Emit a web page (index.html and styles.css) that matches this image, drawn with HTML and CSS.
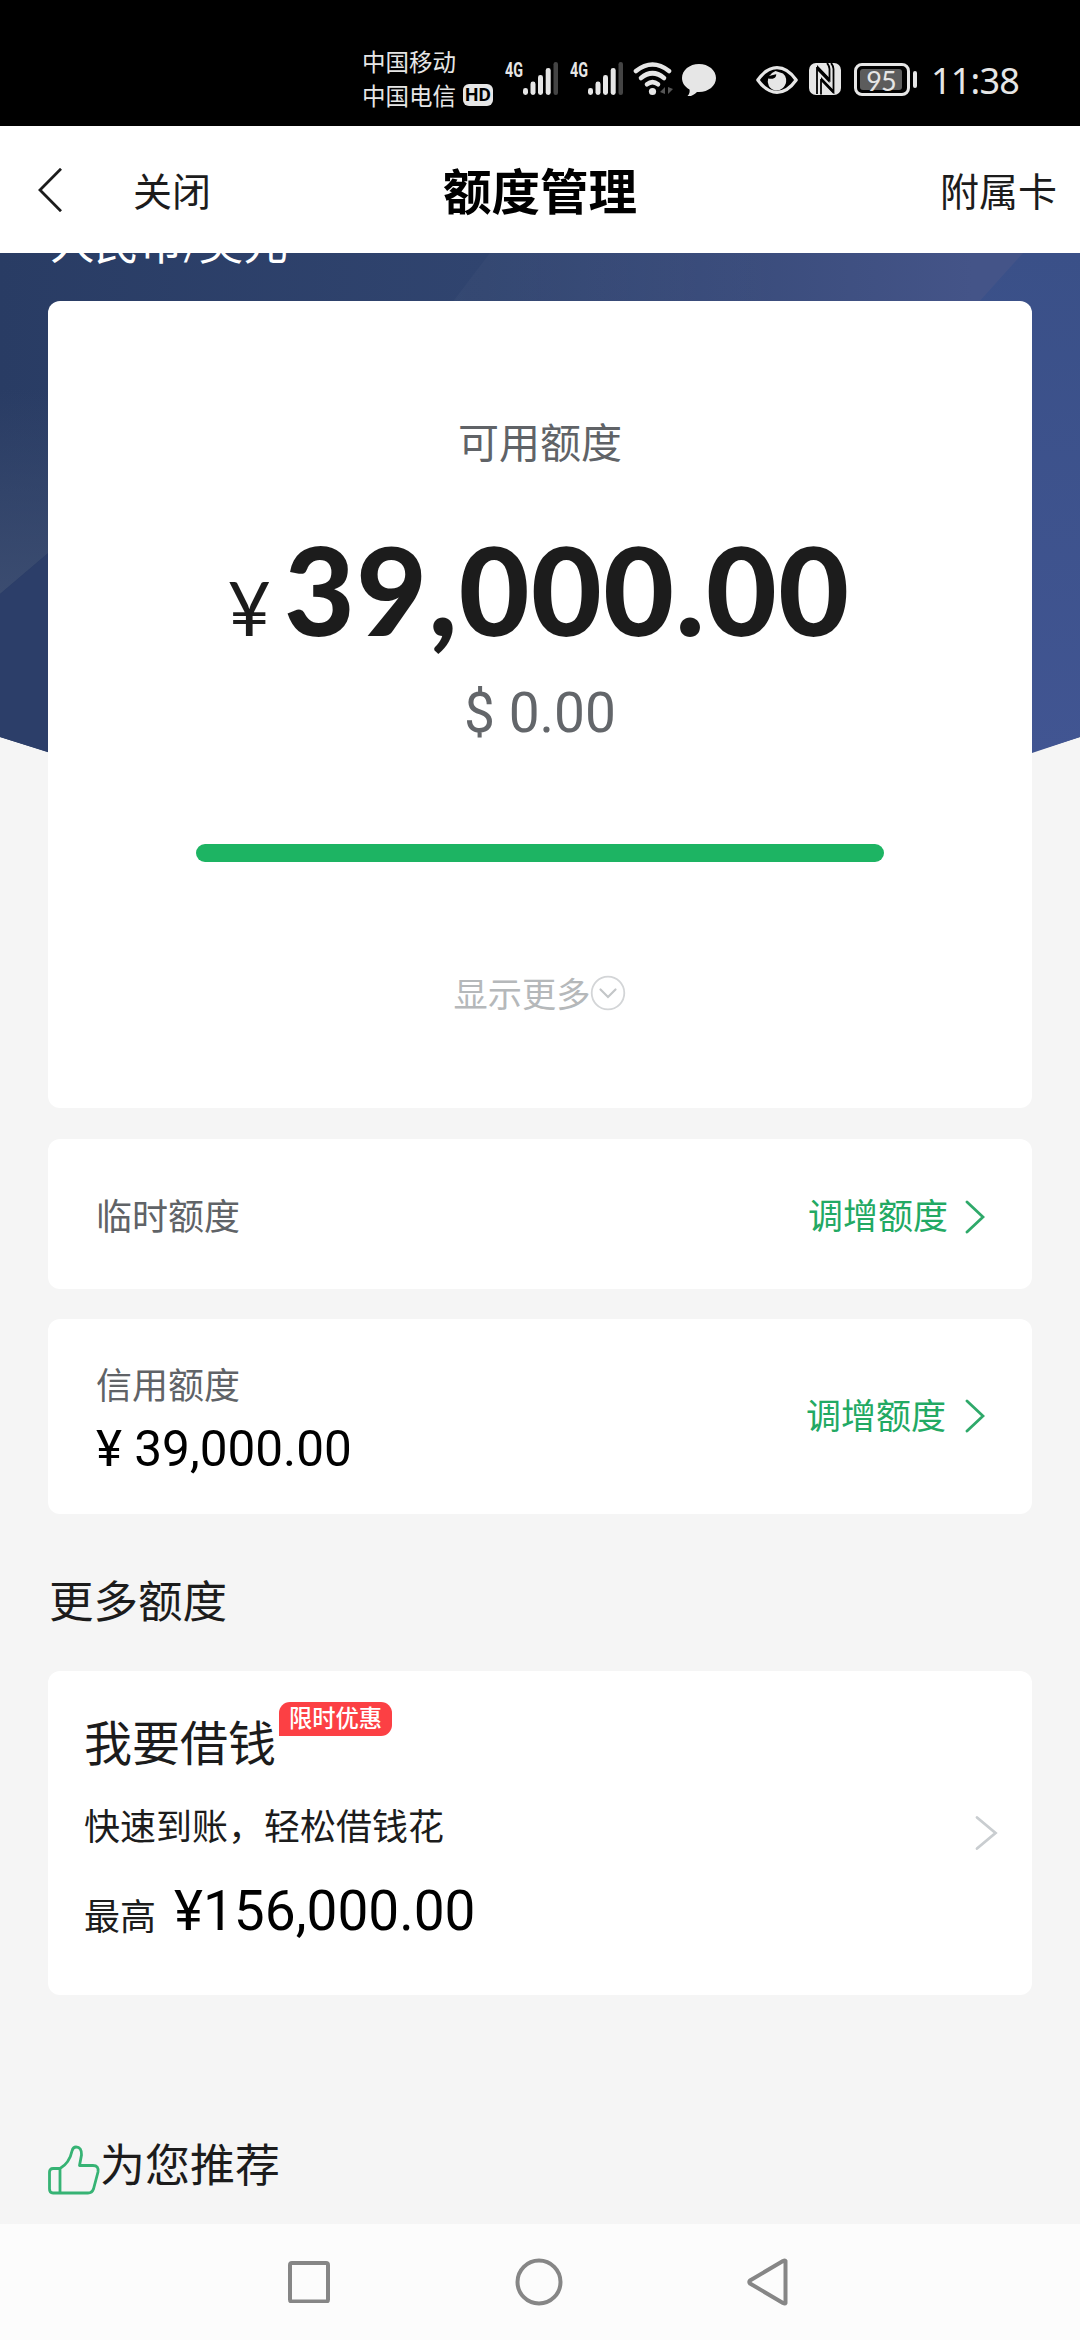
FILE: index.html
```html
<!DOCTYPE html>
<html lang="zh-CN">
<head>
<meta charset="utf-8">
<title>额度管理</title>
<link rel="stylesheet" href="styles.css">
</head>
<body>
<div class="screen">
  <div class="status">
    <div class="carriers">
      <div class="carrier">中国移动</div>
      <div class="carrier">中国电信<span class="hd">HD</span></div>
    </div>
    <svg class="signal" width="54" height="42" viewBox="0 -8 54 42" fill="#e6e6e6">
      <text x="0" y="15" class="net" textLength="18" lengthAdjust="spacingAndGlyphs">4G</text>
      <rect x="18" y="26" width="5" height="7" rx="2.4"/><rect x="25.500" y="19.500" width="5" height="13.500" rx="2.400"/><rect x="33" y="13" width="5" height="20" rx="2.400"/><rect x="40.700" y="6" width="5" height="27" rx="2.400"/><rect x="48.500" y="0" width="4.500" height="33" rx="2.200" fill="#444"/>
    </svg>
    <svg class="signal second" width="54" height="42" viewBox="0 -8 54 42" fill="#e6e6e6">
      <text x="0" y="15" class="net" textLength="18" lengthAdjust="spacingAndGlyphs">4G</text>
      <rect x="18" y="26" width="5" height="7" rx="2.4"/><rect x="25.500" y="19.500" width="5" height="13.500" rx="2.400"/><rect x="33" y="13" width="5" height="20" rx="2.400"/><rect x="40.700" y="6" width="5" height="27" rx="2.400"/><rect x="48.500" y="0" width="4.500" height="33" rx="2.200" fill="#444"/>
    </svg>
    <svg class="wifi" width="42" height="34" viewBox="0 0 42 34" fill="none" stroke="#e6e6e6" stroke-width="4.600" stroke-linecap="round">
      <path d="M3 9Q19.500-4 36 9"/><path d="M8 16Q19.500 6.500 31 16"/><path d="M14 22.300Q19.500 18 25 22.300"/>
      <circle cx="19.500" cy="29.500" r="3.600" fill="#e6e6e6" stroke="none"/>
      <path d="M27 30L32 25V32zM35 25V32L40 27z" fill="#555" stroke="none"/>
    </svg>
    <svg class="bubble" width="34" height="33" viewBox="0 0 34 33" fill="#e6e6e6"><path d="M17 0C26.500 0 34 6.300 34 14S26.500 28 17 28L15 27.900C12 31 9 32.500 5.500 32 7.500 30 8 27.500 7.500 25.500 3 23 0 19 0 14 0 6.300 7.500 0 17 0z"/></svg>
    <svg class="eye" width="42" height="28" viewBox="0 0 42 28"><path d="M1.800 14Q10.500 1.700 21 1.700T40.200 14Q31.500 26.300 21 26.300T1.800 14z" fill="none" stroke="#e6e6e6" stroke-width="3.200" stroke-linejoin="round"/><path d="M20 6.500C21 10.500 19 14 12.200 12.500A9 9 0 1 0 20 6.500z" fill="#e6e6e6"/><path d="M13 10Q15 8.500 16 7L19.500 5 27 7.500A9 9 0 0 1 29 19L24 20 21 8z" fill="#e6e6e6"/></svg>
    <svg class="nfc" width="32" height="32" viewBox="0 0 32 32"><rect width="32" height="32" rx="7" fill="#e6e6e6"/><path d="M8 31V4M8 4L20.500 17V6Q20 2 18 0M12 16V31.500M12 16L24.500 29V6Q24 2 22 0" fill="none" stroke="#000" stroke-width="1.800"/><path d="M8 2L20.500 15V20L8 7zM12 14L24.500 27V31L12 18z" fill="#000"/></svg>
    <div class="battery"><span class="charge">95</span></div>
    <div class="time">11:38</div>
  </div>

  <header class="topbar">
    <div class="left">
      <svg width="24" height="44" viewBox="0 0 24 44" fill="none" stroke="#1c1c1c" stroke-width="2.800"><path d="M23 .8L2 22 23 43.200"/></svg>
      <span>关闭</span>
    </div>
    <h1>额度管理</h1>
    <div class="right">附属卡</div>
  </header>

  <main class="content">
    <svg class="hero" width="1080" height="560" viewBox="0 0 1080 560">
      <defs>
        <linearGradient id="base" x1="0" y1="0" x2="1" y2="0"><stop offset="0" stop-color="#293c64"/><stop offset=".45" stop-color="#30446f"/><stop offset=".9" stop-color="#445488"/><stop offset="1" stop-color="#445488"/></linearGradient>
        <linearGradient id="haze" x1="0" y1="0" x2="0" y2="1"><stop offset=".4" stop-color="#3b4c70" stop-opacity="0"/><stop offset="1" stop-color="#3b4c70"/></linearGradient>
        <linearGradient id="edge" x1="0" y1="0" x2="0" y2="1"><stop offset="0" stop-color="#3a5088"/><stop offset="1" stop-color="#415592"/></linearGradient>
        <linearGradient id="ray" x1="0" y1="0" x2="1" y2="0"><stop offset="0" stop-color="#fff" stop-opacity=".025"/><stop offset="1" stop-color="#fff" stop-opacity="0"/></linearGradient>
      </defs>
      <path d="M0 0H1080V484Q540 660 0 484z" fill="url(#base)"/>
      <path d="M0 0H60V290L0 341z" fill="url(#haze)"/>
      <path d="M0 341L60 290V503L0 484z" fill="#2c3e69"/>
      <path d="M490 0H800V50H452z" fill="url(#ray)"/>
      <path d="M1023 0H1080V484L1020 504V50H978z" fill="url(#edge)"/>
    </svg>
    <div class="currency">人民币<span class="slash">/</span>美元</div>

    <section class="card summary">
      <div class="label">可用额度</div>
      <div class="amount"><span class="yen">¥</span><span class="figure">39,000.00</span></div>
      <div class="dollar">$ 0.00</div>
      <div class="bar"></div>
      <div class="more"><span>显示更多</span>
        <svg width="36" height="36" viewBox="0 0 36 36" fill="none"><circle cx="18" cy="18" r="16.300" stroke="#d3d5d7" stroke-width="1.800"/><path d="M10.500 14.500L18 22 25.500 14.500" stroke="#c3c6c8" stroke-width="2.200" stroke-linecap="round"/></svg>
      </div>
    </section>

    <section class="card row temp">
      <div class="label">临时额度</div>
      <div class="action"><span>调增额度</span>
        <svg width="20" height="34" viewBox="0 0 20 34" fill="none" stroke="#2fa96a" stroke-width="2.800" stroke-linecap="round"><path d="M2 2L18 17 2 32"/></svg>
      </div>
    </section>

    <section class="card row credit">
      <div class="limits">
        <div class="label">信用额度</div>
        <div class="value">¥ 39,000.00</div>
      </div>
      <div class="action"><span>调增额度</span>
        <svg width="20" height="34" viewBox="0 0 20 34" fill="none" stroke="#2fa96a" stroke-width="2.800" stroke-linecap="round"><path d="M2 2L18 17 2 32"/></svg>
      </div>
    </section>

    <h2 class="section">更多额度</h2>

    <section class="card loan">
      <div class="loan-text">
        <div class="loan-title">我要借钱<span class="badge">限时优惠</span></div>
        <div class="loan-desc">快速到账，轻松借钱花</div>
        <div class="loan-max"><span>最高</span><span class="loan-value">¥156,000.00</span></div>
      </div>
      <svg width="24" height="36" viewBox="0 0 24 36" fill="none" stroke="#c9cdd0" stroke-width="2.800" stroke-linecap="round"><path d="M3 2.500L21.500 18 3 33.500"/></svg>
    </section>

    <div class="recommend">
      <svg width="52" height="50" viewBox="0 0 52 50" fill="none" stroke="#36b374" stroke-width="2.800" stroke-linejoin="round"><path d="M12 23.500H5Q1.500 23.500 1.500 27V44Q1.500 48 5 48H40Q44 48 45.500 44L50 27Q51 20.500 45 20.500H31.500L33.500 10Q33.800 2 28 2 25 2 24 6 21.500 18 12 23.500zM12 23.500V48"/></svg>
      <span>为您推荐</span>
    </div>
  </main>

  <nav class="navbar">
    <svg width="42" height="42" viewBox="0 0 42 42" fill="none" stroke="#868686" stroke-width="4"><rect x="2" y="2" width="38" height="38.500" rx="2"/></svg>
    <svg width="48" height="48" viewBox="0 0 48 48" fill="none" stroke="#868686" stroke-width="4"><circle cx="24" cy="24" r="21.500"/></svg>
    <svg width="42" height="48" viewBox="0 0 42 48" fill="none" stroke="#868686" stroke-width="4" stroke-linejoin="round"><path d="M38.500 3V45Q38 46 36 45L3 25.500Q1.500 24 3 22.500L36 3Q38 2 38.500 3z"/></svg>
  </nav>
</div>
</body>
</html>
```
FILE: styles.css
```css
* { box-sizing: border-box; }

body {
  margin: 0;
  background: #f5f5f5;
  color: #1c1c1c;
  font-family: "Noto Sans CJK SC", sans-serif;
}

svg { display: block; flex: none; }

.screen {
  width: 1080px;
  height: 2340px;
  display: flex;
  flex-direction: column;
  overflow: hidden;
}

/* system status bar */
.status {
  height: 126px;
  flex: none;
  background: #000;
  color: #e6e6e6;
  display: flex;
  align-items: flex-start;
  padding: 44px 0 0 362px;
}

.carriers { width: 143px; }

.carrier {
  height: 34px;
  line-height: 34px;
  font-size: 23.5px;
  display: flex;
  align-items: center;
}

.hd {
  width: 30px;
  height: 22px;
  margin-left: 7px;
  border-radius: 6px;
  background: #e6e6e6;
  color: #000;
  font: 700 19px/22px "Roboto", sans-serif;
  text-align: center;
}

.signal { margin-top: 10px; }
.second { margin-left: 11px; }
.net { font: 700 20px "Roboto", sans-serif; }
.wifi { margin: 18px 0 0 9px; }
.bubble { margin: 20px 0 0 7px; }
.eye { margin: 22px 0 0 40px; }
.nfc { margin: 19px 0 0 11px; }

.battery {
  position: relative;
  width: 56px;
  height: 33px;
  margin: 19px 0 0 13px;
  padding: 3px;
  border: 3px solid #e6e6e6;
  border-radius: 8px;
}

.battery::after {
  content: "";
  position: absolute;
  left: 56px;
  top: 5px;
  width: 4px;
  height: 17px;
  border-radius: 2px;
  background: #e6e6e6;
}

.charge {
  display: block;
  width: 42px;
  height: 21px;
  border-radius: 3px;
  background: #5c5c5c;
  font: 27px/23px "Lato", sans-serif;
  letter-spacing: -1px;
  text-align: center;
}

.time {
  margin: 15px 0 0 21px;
  font: 36px/44px "Noto Sans", sans-serif;
  letter-spacing: -0.8px;
  white-space: nowrap;
}

/* page header */
.topbar {
  height: 127px;
  flex: none;
  background: #fff;
  display: grid;
  grid-template-columns: 1fr auto 1fr;
  align-items: center;
  padding: 0 23px 0 38px;
  font-size: 39px;
  line-height: 60px;
  position: relative;
  z-index: 1;
}

.left { display: flex; align-items: center; gap: 71px; }
.left span, .right { margin-top: -1px; }
.right { text-align: right; }

.topbar h1 {
  margin: -1px 15px 0 0;
  color: #000;
  font-size: 48.5px;
  font-weight: 700;
  line-height: 60px;
}

/* scrolled content */
.content {
  flex: 1;
  min-height: 0;
  position: relative;
  padding: 0 48px;
}

.hero { position: absolute; left: 0; top: 0; }

.currency {
  position: relative;
  height: 60px;
  line-height: 60px;
  margin-top: -42px;
  margin-bottom: 30px;
  padding-left: 2px;
  color: #fff;
  font-size: 44.5px;
}

.slash { font: 37px/1 "Roboto", sans-serif; }

.card {
  position: relative;
  background: #fff;
  border-radius: 12px;
}

.label { color: #606367; font-size: 36px; line-height: 44px; }

.summary {
  height: 807px;
  padding-top: 109px;
  display: flex;
  flex-direction: column;
  align-items: center;
}

.summary .label { font-size: 41px; line-height: 60px; }

.amount {
  height: 120px;
  margin-top: 59px;
  display: flex;
  align-items: baseline;
  font-family: "Lato", sans-serif;
  line-height: 120px;
}

.yen { font-size: 75px; line-height: 79px; padding-bottom: 2px; }

.figure {
  margin: 0 2px 0 13px;
  font-size: 122px;
  font-weight: 900;
  letter-spacing: 1.5px;
}

.dollar {
  margin-top: 34px;
  color: #63666a;
  font: 55px/60px "Roboto", sans-serif;
}

.bar {
  width: 688px;
  height: 18px;
  margin-top: 101px;
  border-radius: 9px;
  background: #1db463;
}

.more {
  height: 50px;
  margin-top: 105px;
  display: flex;
  align-items: center;
  color: #b5b8ba;
  font-size: 34.2px;
  line-height: 50px;
}

.more svg { margin-top: 2px; }

.row {
  display: flex;
  justify-content: space-between;
  align-items: center;
  padding: 0 47px 0 48px;
}

.temp { height: 150px; margin-top: 31px; }
.credit { height: 195px; margin-top: 30px; }

.limits { padding-top: 7px; }

.value {
  margin-top: 14px;
  color: #000;
  font: 49.5px/60px "Roboto", sans-serif;
}

.action {
  display: flex;
  align-items: center;
  gap: 17px;
  color: #22a963;
  font-size: 35px;
  line-height: 44px;
}

.action svg { margin-top: 5px; }
.credit .action { gap: 19px; padding-bottom: 6px; }

.section {
  margin: 55px 0 42px 1px;
  font-size: 44.5px;
  font-weight: 400;
  line-height: 60px;
}

.loan {
  height: 324px;
  padding: 39px 34px 0 36px;
  display: flex;
  justify-content: space-between;
}

.loan > svg { margin-top: 105px; }

.loan-title {
  display: flex;
  font-size: 48px;
  line-height: 60px;
}

.badge {
  width: 113px;
  height: 34px;
  margin: -8px 0 0 3px;
  border-radius: 11px 11px 11px 0;
  background: #fc4044;
  color: #fff;
  font-size: 23.3px;
  font-weight: 500;
  line-height: 31px;
  text-align: center;
}

.loan-desc { margin-top: 29px; font-size: 36px; line-height: 50px; }

.loan-max {
  height: 60px;
  margin-top: 32px;
  display: flex;
  align-items: baseline;
  font-size: 36px;
  line-height: 44px;
}

.loan-value {
  margin-left: 18px;
  color: #000;
  font: 55px/60px "Roboto", sans-serif;
}

.recommend {
  margin-top: 138px;
  display: flex;
  align-items: flex-start;
  font-size: 45px;
  line-height: 60px;
}

.recommend svg { margin-top: 12px; }

/* system navigation */
.navbar {
  height: 116px;
  flex: none;
  background: #fcfcfc;
  display: flex;
  align-items: center;
  justify-content: space-between;
  padding: 0 291px 0 288px;
}
```
